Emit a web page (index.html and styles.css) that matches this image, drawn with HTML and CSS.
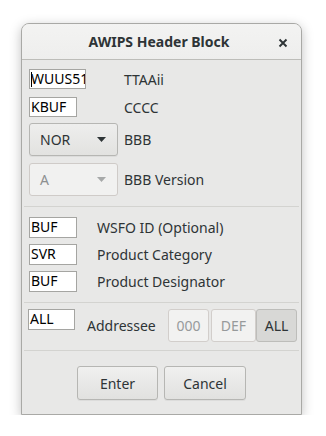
FILE: index.html
```html
<!DOCTYPE html>
<html lang="en">

<head>
    <meta charset="UTF-8">
    <title>AWIPS Header Block</title>
    <link rel="stylesheet" href="styles.css">
</head>

<body>

    <div class="window">
        <!-- Title bar -->
        <div class="titlebar">
            <div class="title">AWIPS Header Block</div>
            <svg class="close" width="10" height="10" viewBox="0 0 10 10">
                <path d="M1.5 1.5 L8.5 8.5 M8.5 1.5 L1.5 8.5" stroke="#2e3436" stroke-width="1.9"/>
            </svg>
        </div>

        <!-- WMO heading -->
        <div class="section section-wmo">
            <div class="row row-first">
                <div class="entry entry-wide"><span class="caret"></span>WUUS51</div>
                <div class="label">TTAAii</div>
            </div>
            <div class="row row-second">
                <div class="entry">KBUF</div>
                <div class="label">CCCC</div>
            </div>
            <div class="row row-combo">
                <div class="combo">
                    <span>NOR</span>
                    <svg width="9" height="5" viewBox="0 0 9 5"><path d="M0 0 H9 L4.5 5 Z" fill="#2e3436"/></svg>
                </div>
                <div class="label">BBB</div>
            </div>
            <div class="row row-combo2">
                <div class="combo disabled">
                    <span>A</span>
                    <svg width="9" height="5" viewBox="0 0 9 5"><path d="M0 0 H9 L4.5 5 Z" fill="#a7a9a9"/></svg>
                </div>
                <div class="label">BBB Version</div>
            </div>
        </div>

        <div class="separator"></div>

        <!-- AWIPS id -->
        <div class="section section-awips">
            <div class="row">
                <div class="entry">BUF</div>
                <div class="label">WSFO ID (Optional)</div>
            </div>
            <div class="row">
                <div class="entry">SVR</div>
                <div class="label">Product Category</div>
            </div>
            <div class="row">
                <div class="entry">BUF</div>
                <div class="label">Product Designator</div>
            </div>
        </div>

        <div class="separator"></div>

        <!-- Addressee -->
        <div class="addressee">
            <div class="entry entry-addr">ALL</div>
            <div class="label">Addressee</div>
            <div class="toggles">
                <div class="toggle disabled">000</div>
                <div class="toggle disabled toggle-def">DEF</div>
                <div class="toggle active">ALL</div>
            </div>
        </div>

        <div class="separator sep-last"></div>

        <div class="actions">
            <div class="button">Enter</div>
            <div class="button">Cancel</div>
        </div>
    </div>

</body>

</html>
```

FILE: styles.css
```css
body {
    margin: 0;
    background-color: #ffffff;
    font-family: "Noto Sans", "DejaVu Sans", sans-serif;
    font-size: 14px;
    color: #2e3436;
}

/* Dialog window */
.window {
    box-sizing: border-box;
    width: 281px;
    height: 392px;
    margin: 23px 0 0 21px;
    background-color: #e8e8e7;
    border: 1px solid #a9a9a6;
    border-radius: 8px 8px 0 0;
    box-shadow: 0 3px 12px rgba(0, 0, 0, 0.25);
    display: flex;
    flex-direction: column;
}

.titlebar {
    height: 35px;
    border-bottom: 1px solid #bdbdb9;
    border-radius: 7px 7px 0 0;
    background: linear-gradient(#f3f3f2, #eeeeed);
    display: flex;
    align-items: center;
    position: relative;
}

.title {
    flex: 1;
    text-align: center;
    font-weight: bold;
    font-size: 14px;
    padding-right: 5px;
    color: #2e3436;
}

.close {
    position: absolute;
    right: 13px;
    top: 14px;
}

/* Rows */
.section {
    display: flex;
    flex-direction: column;
    padding-left: 7px;
}

.row {
    display: grid;
    align-items: center;
}

.section-wmo .row {
    grid-template-columns: 95px auto;
}

.row-first {
    margin-top: 9px;
}

.row-second {
    margin-top: 8px;
}

.row-combo {
    margin-top: 6px;
}

.row-combo2 {
    margin-top: 7px;
}

.section-awips .row {
    grid-template-columns: 68px auto;
    margin-top: 6px;
}

.section-awips .row:first-child {
    margin-top: 10px;
}

.label {
    white-space: nowrap;
}

/* Text entries */
.entry {
    box-sizing: border-box;
    width: 48px;
    height: 21px;
    background-color: #ffffff;
    border: 1px solid #a5a5a2;
    color: #000000;
    line-height: 18px;
    padding-left: 1px;
    overflow: hidden;
    white-space: nowrap;
    position: relative;
}

.section-wmo .entry {
    height: 20px;
    line-height: 17px;
}

.entry-wide {
    width: 57px;
}

.caret {
    position: absolute;
    left: 1px;
    top: 2px;
    width: 1px;
    height: 15px;
    background-color: #000000;
}

/* Combo boxes */
.combo {
    box-sizing: border-box;
    width: 89px;
    height: 33px;
    border: 1px solid #b6b6b3;
    border-radius: 3px;
    background: linear-gradient(#eeeeed, #e2e2e0);
    box-shadow: 0 1px 0 rgba(0, 0, 0, 0.05);
    display: flex;
    align-items: center;
    justify-content: space-between;
    padding: 0 11px 0 10px;
}

.combo.disabled {
    background: #f1f1f0;
    border-color: #cfcbc8;
    color: #8d9091;
    box-shadow: none;
}

.separator {
    height: 1px;
    margin: 10px 2px 0;
    background-color: #d3d3d0;
}

/* Addressee row */
.addressee {
    display: flex;
    align-items: center;
    margin-top: 6px;
    padding: 0 4px 0 6px;
}

.entry-addr {
    width: 47px;
    align-self: flex-start;
    margin-right: 12px;
}

.toggles {
    display: flex;
    margin-left: auto;
}

.toggle {
    box-sizing: border-box;
    width: 41px;
    height: 33px;
    border: 1px solid #b6b6b3;
    border-radius: 3px;
    display: flex;
    align-items: center;
    justify-content: center;
}

.toggle.disabled {
    background-color: #f2f2f1;
    border-color: #d2cecb;
    color: #979a9b;
}

.toggle-def {
    width: 45px;
    margin-left: 2px;
}

.toggle.active {
    background-color: #d8d8d6;
    border-color: #bdbdba;
}

.sep-last {
    margin-top: 8px;
}

/* Dialog buttons */
.actions {
    display: flex;
    justify-content: center;
    gap: 6px;
    margin-top: 15px;
}

.button {
    box-sizing: border-box;
    width: 81px;
    height: 34px;
    border: 1px solid #b6b6b3;
    border-radius: 3px;
    background: linear-gradient(#f0f0ef, #e1e1df);
    box-shadow: 0 1px 0 rgba(0, 0, 0, 0.05);
    display: flex;
    align-items: center;
    justify-content: center;
}

.button + .button {
    width: 82px;
}
```
